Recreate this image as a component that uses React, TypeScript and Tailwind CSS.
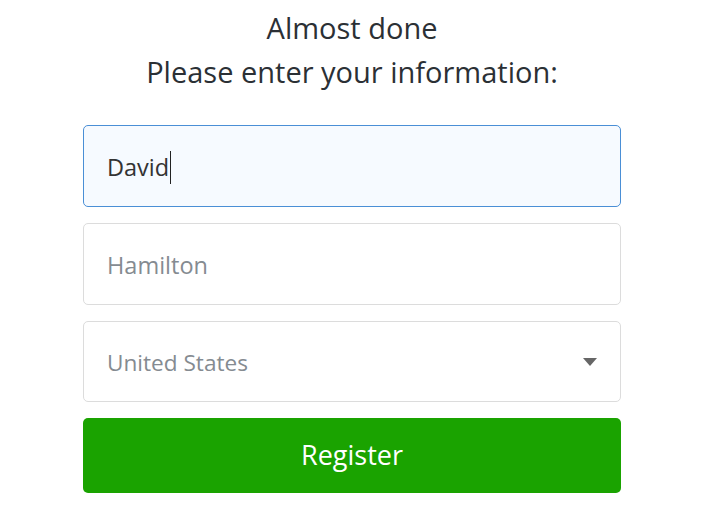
import React from "react";

const font = { fontFamily: '"Open Sans", "Noto Sans", sans-serif' };

export default function App() {
  return (
    <div className="min-h-screen bg-white font-['Open_Sans',sans-serif] text-[#2b2f33]">
      <div className="mx-auto w-[538px] pt-[6px]">
        <div className="text-center text-[29px] leading-[44px] text-[#2b3035]">
          <p>Almost done</p>
          <p>Please enter your information:</p>
        </div>
        <div className="mt-[31px] flex flex-col gap-4">
          <div className="flex h-[82px] items-center rounded-[5px] border border-[#4a8fd6] bg-[#f6faff] px-[23px] pt-[3px] text-[23.5px] text-[#333]">
            <span>David</span>
            <span className="ml-[1px] h-[33px] w-px bg-[#222]" />
          </div>
          <div className="flex h-[82px] items-center rounded-[5px] border border-[#dcdcdc] bg-white px-[23px] pt-[3px] text-[23.5px] text-[#858b91]">
            Hamilton
          </div>
          <div className="flex h-[81px] items-center justify-between rounded-[5px] border border-[#dcdcdc] bg-white pl-[23px] pr-[23px] pt-[3px] text-[22.6px] text-[#858b91]">
            <span>United States</span>
            <svg width="14" height="8" viewBox="0 0 14 8" className="-mt-[3px]">
              <path d="M0 0 L14 0 L7 8 Z" fill="#666" />
            </svg>
          </div>
          <button className="h-[75px] rounded-[5px] bg-[#1aa300] text-[27px] text-white" style={font}>
            Register
          </button>
        </div>
      </div>
    </div>
  );
}
